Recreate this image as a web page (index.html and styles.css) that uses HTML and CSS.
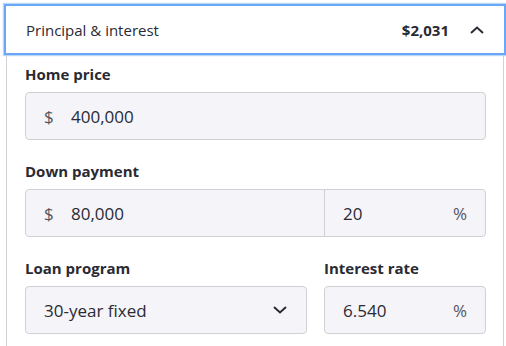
FILE: index.html
```html
<!DOCTYPE html>
<html lang="en">
<head>
    <meta charset="UTF-8">
    <meta name="viewport" content="width=device-width, initial-scale=1.0">
    <title>Payment breakdown</title>
    <link rel="stylesheet" href="styles.css">
</head>
<body>
    <div class="section">
        <button class="section-head">
            <span class="head-title">Principal &amp; interest</span>
            <span class="head-amount">$2,031</span>
            <svg class="chevron" width="14" height="8" viewBox="0 0 14 8">
                <path d="M1 7 L7 1.5 L13 7" fill="none" stroke="#2a2a33" stroke-width="2"/>
            </svg>
        </button>

        <div class="section-body">
            <div class="field">
                <div class="field-label">Home price</div>
                <div class="box">
                    <span class="prefix">$</span>
                    <span class="value">400,000</span>
                </div>
            </div>

            <div class="field">
                <div class="field-label">Down payment</div>
                <div class="box split">
                    <div class="part part-main">
                        <span class="prefix">$</span>
                        <span class="value">80,000</span>
                    </div>
                    <div class="part part-side">
                        <span class="value">20</span>
                        <span class="suffix">%</span>
                    </div>
                </div>
            </div>

            <div class="row">
                <div class="field field-wide">
                    <div class="field-label">Loan program</div>
                    <div class="box select">
                        <span class="value">30-year fixed</span>
                        <svg class="chevron" width="14" height="8" viewBox="0 0 14 8">
                            <path d="M1 1 L7 6.5 L13 1" fill="none" stroke="#2a2a33" stroke-width="2"/>
                        </svg>
                    </div>
                </div>
                <div class="field field-narrow">
                    <div class="field-label">Interest rate</div>
                    <div class="box">
                        <span class="value">6.540</span>
                        <span class="suffix">%</span>
                    </div>
                </div>
            </div>
        </div>
    </div>
</body>
</html>
```

FILE: styles.css
```css
body {
    margin: 0;
    font-family: 'Open Sans', 'Liberation Sans', sans-serif;
    color: #2a2a33;
    background-color: #ffffff;
}

.section {
    margin-left: 6px;
    width: 498px;
}

/* header with the focus ring */
.section-head {
    display: flex;
    align-items: center;
    width: 502px;
    height: 51px;
    margin: 4px 0 0 -2px;
    padding: 0 20px 0 20px;
    box-sizing: border-box;
    background-color: #ffffff;
    border: 2px solid #6aa8f7;
    box-shadow: 0 0 1px 1px #b9d6fb;
    font-family: inherit;
    font-size: 15px;
    color: #2a2a33;
    cursor: pointer;
}

.head-title {
    flex: 1;
    text-align: left;
}

.head-amount {
    font-weight: 700;
    margin-right: 21px;
}

.section-body {
    border-left: 1px solid #d1d1d5;
    border-right: 1px solid #d1d1d5;
    padding: 9px 17px 20px 18px;
    min-height: 300px;
}

.field {
    margin-bottom: 21px;
}

.field-label {
    font-size: 15px;
    font-weight: 700;
    line-height: 20px;
    margin-bottom: 8px;
}

.box {
    display: flex;
    align-items: center;
    height: 48px;
    box-sizing: border-box;
    padding: 0 18px 0 18px;
    background-color: #f4f4f9;
    border: 1px solid #d1d1d5;
    border-radius: 4px;
    font-size: 17px;
}

.prefix {
    color: #54545e;
    width: 27px;
}

.value {
    flex: 1;
}

.suffix {
    color: #54545e;
}

.split {
    padding: 0;
}

.part {
    display: flex;
    align-items: center;
    height: 100%;
    box-sizing: border-box;
}

.part-main {
    width: 299px;
    padding-left: 18px;
    border-right: 1px solid #d1d1d5;
}

.part-side {
    flex: 1;
    padding: 0 18px 0 18px;
}

.row {
    display: flex;
    gap: 17px;
}

.field-wide {
    width: 282px;
}

.field-narrow {
    flex: 1;
}

.select .chevron {
    margin-right: 1px;
}
```
